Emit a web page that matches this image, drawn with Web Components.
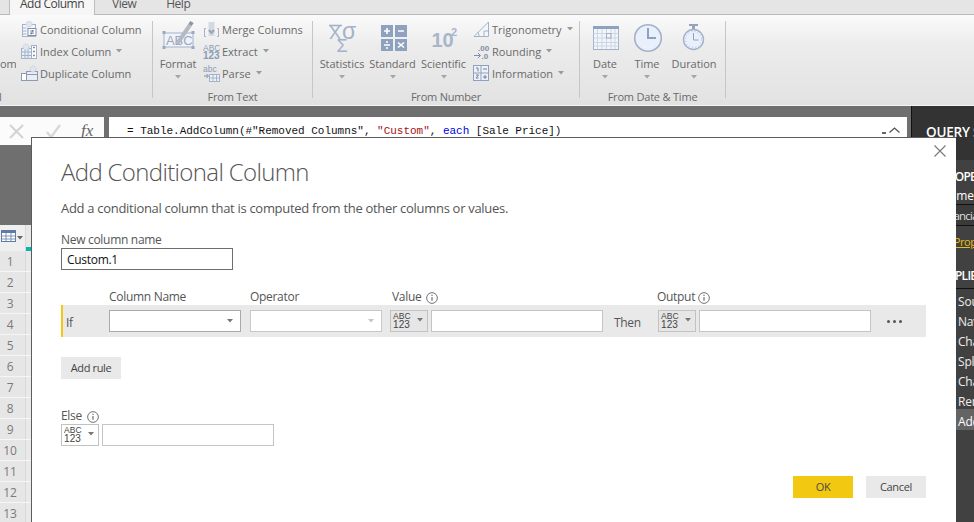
<!DOCTYPE html>
<html><head><meta charset="utf-8"><title>Add Conditional Column</title>
<style>
html,body{margin:0;padding:0;background:#6f6f6f;}
body{font-family:"Open Sans","Liberation Sans",sans-serif;width:974px;height:522px;overflow:hidden;}
</style></head><body>
<pq-app></pq-app>
<script>
const UI='"Open Sans","Liberation Sans",sans-serif';
function def(name,css,html,init){
  customElements.define(name,class extends HTMLElement{
    connectedCallback(){
      if(this.shadowRoot)return;
      const r=this.attachShadow({mode:'open'});
      const h=typeof html==='function'?html(this):html;
      r.innerHTML='<style>'+css+'</style>'+h;
      if(init)init(this,r);
    }
  });
}
const C='#a3b2ca',D='#8ea2c0',G='#c4ccd8';
const caret=(c='#9a9a9a')=>`<svg class="car" width="6" height="3.5" viewBox="0 0 7 4"><path d="M0 0h7L3.5 4z" fill="${c}"/></svg>`;
const gear=(x,y)=>`<circle cx="${x}" cy="${y}" r="3" fill="#dfe5ee" stroke="${G}" stroke-dasharray="1.5 1"/>`;
const txt=(x,y,s,t,f=C,w=400,fam='Liberation Sans')=>`<text x="${x}" y="${y}" font-size="${s}" font-weight="${w}" font-family="${fam}" fill="${f}">${t}</text>`;
const ICONS={
cond:`<rect x="1.5" y="3.5" width="13" height="12" fill="#f3f6fa" stroke="${C}"/><path d="M1.5 7h4M1.5 10h4M1.5 13h4" stroke="${C}"/>${gear(8,3)}<rect x="7" y="7.5" width="8" height="7" fill="#fff" stroke="#7e8fa8"/><path d="M9 10h4M9 12.2h4M12 9l-2 4.5" stroke="#5c6b82" stroke-width=".8" fill="none"/>`,
index:`<rect x=".5" y="5.5" width="10" height="10" fill="#e9eef5" stroke="${C}"/><path d="M4 5.5v10M7 5.5v10M.5 9h10M.5 12.5h10" stroke="${C}"/>${gear(5,4)}<rect x="10.5" y="2.5" width="5" height="13" fill="#fff" stroke="${C}"/><path d="M12 4.5h2M12 8.5h2M12 12.5h2" stroke="#7e8fa8" stroke-width="1.4"/>`,
dup:`<rect x=".5" y="8.5" width="9" height="7" fill="#fff" stroke="#8c9bb3"/><rect x="5.5" y="6.5" width="11" height="9" fill="#e9eef5" stroke="#8c9bb3"/>${gear(12,4)}<path d="M5.5 9.5h11" stroke="#8c9bb3"/>`,
merge:`<path d="M3 7.5H1.5v8H3M14 7.5h1.5v8H14" fill="none" stroke="${C}"/><rect x="5.5" y="1" width="6" height="14" fill="#d5dae2"/><path d="M6 9l2.5 3L11 9" stroke="#9aa4b4" stroke-width="2" fill="none"/>`,
extract:txt(0,7.5,8.5,'ABC','#8a9bb5',400)+txt(0,16,10,'123','#8a9bb5',700),
parse:txt(0,7,8.5,'abc','#8a9bb5',400)+`<path d="M1 11h4M3.5 9l2 2-2 2" stroke="#7e8fa8" fill="none"/><rect x="6.5" y="9.5" width="10" height="7" fill="#eef2f8" stroke="${C}"/><path d="M10 9.5v7M13.5 9.5v7M6.5 13h10" stroke="${C}"/>`,
trig:`<path d="M1 15.5L15.5 1v14.5z" fill="#f4f6f9" stroke="${C}"/><path d="M11 15V10h4.5" fill="none" stroke="${C}"/><path d="M6 15a5 5 0 0 0-1.5-4" fill="none" stroke="${C}"/>`,
round:txt(5,7.5,8,'.00','#7e8fa8',700)+`<path d="M1 12.5h6M5 10l2.5 2.5L5 15" stroke="#7e8fa8" fill="none"/>`+txt(8.5,16,8,'.0','#7e8fa8',700),
info:`<rect x=".5" y=".5" width="15" height="15" fill="#eef2f8" stroke="${D}"/><path d="M8 .5v15M.5 8h15" stroke="${D}"/><path d="M3 3h2v3.5M10 4h4M10 12h4M12 10v4M3 10h2.5L3 13h2.5" stroke="#6d82a3" fill="none"/>`,
format:`<rect x="5" y="14" width="29" height="14" fill="#f0f4fa" stroke="${C}"/><g fill="#9aa9c2"><rect x="3.5" y="12" width="3" height="3"/><rect x="32.5" y="12" width="3" height="3"/><rect x="3.5" y="27" width="3" height="3"/><rect x="32.5" y="27" width="3" height="3"/></g>`+txt(7,26,13,'ABC','#98a8c2')+`<path d="M18 25L31 6" stroke="#b4b9c2" stroke-width="4"/><path d="M31 6l2-3" stroke="#8c95a3" stroke-width="4"/>`,
stats:`<path d="M6 6.5h13" stroke="${C}" stroke-width="1.6"/>`+txt(6,20,18,'X',C)+txt(19,20,23,'σ',C)+txt(13.5,33,18,'Σ',C),
standard:`<g fill="${D}"><rect x="7" y="6" width="12" height="12"/><rect x="21" y="6" width="12" height="12"/><rect x="7" y="20" width="12" height="12"/><rect x="21" y="20" width="12" height="12"/></g><path d="M10 12h6M13 9v6M24 12h6M10 26h6M24 23.5l6 5M30 23.5l-6 5" stroke="#fff" stroke-width="1.6"/><circle cx="13" cy="23" r="1" fill="#fff"/><circle cx="13" cy="29" r="1" fill="#fff"/>`,
sci:txt(6.5,28,20,'10','#a9b6c9',700)+txt(26,17,11,'2','#a9b6c9',700),
date:`<rect x="7.5" y="7.5" width="25" height="23" fill="#f2f5fa" stroke="${C}"/><rect x="7" y="7" width="26" height="3" fill="${D}"/><path d="M11.5 10v20M16 10v20M20.5 10v20M25 10v20M29 10v20M7.5 14.5h25M7.5 19h25M7.5 23.5h25M7.5 27h25" stroke="#cdd6e5"/><rect x="20.5" y="14.5" width="4.5" height="4.5" fill="none" stroke="#a3b2ca"/>`,
time:`<circle cx="20" cy="19" r="13.3" fill="#e9f0fb" stroke="${C}" stroke-width="1.6"/><path d="M20 9v10h8" fill="none" stroke="${D}" stroke-width="2"/>`,
dur:`<circle cx="18.5" cy="20.5" r="10" fill="#e9f0fb" stroke="${C}" stroke-width="1.4"/><path d="M14 6h9" stroke="#98a4b6" stroke-width="2"/><path d="M18.5 7v3" stroke="#98a4b6" stroke-width="3"/><path d="M18.5 14v7h5" fill="none" stroke="${D}"/><circle cx="18.5" cy="20.5" r="8" fill="none" stroke="#b4c0d4" stroke-dasharray="1 2.2"/>`,
table:`<rect x=".5" y=".5" width="14" height="11" fill="#fff" stroke="#5f7ba3"/><rect x="0" y="0" width="15" height="3" fill="#5f7ba3"/><path d="M5 3v8M10 3v8M.5 6h14M.5 9h14" stroke="#7e95b7"/>`
};

def('rb-tab',`:host{display:block;padding:0 11px;height:14px;line-height:13px;font-size:12px;color:#555;letter-spacing:-.5px;margin-top:-3px;white-space:nowrap}
:host([active]){background:#f6f6f6;border:1px solid #bdbdbd;border-top:0;border-bottom:0;margin-top:0;height:15px;line-height:7px;color:#444;padding:0 10px}`,`<slot></slot>`);

def('pq-tabs',`:host{display:flex;height:14px;background:#e5e5e5;border-bottom:1px solid #b9b9b9;padding-left:9px;flex:none;overflow:visible}`,`<slot></slot>`);

def('rb-small',`:host{display:flex;align-items:center;height:22px;gap:2px;font-size:11px;letter-spacing:0;color:#6a6a6a;white-space:nowrap}
svg.i{width:17px;height:17px;flex:none;display:block}.c{margin-left:3px;display:flex}`,
e=>`<svg class="i" viewBox="0 0 17 17">${ICONS[e.getAttribute('icon')]}</svg><span><slot></slot></span>${e.hasAttribute('caret')?`<span class="c">${caret()}</span>`:''}`);

def('rb-large',`:host{display:flex;flex-direction:column;align-items:center;font-size:11px;letter-spacing:-.05px;color:#6a6a6a;white-space:nowrap}
svg.big{width:38px;height:38px;display:block;flex:none}.t{line-height:14px;height:14px}.c{display:flex;margin-top:4px}`,
e=>`<svg class="big" viewBox="0 0 38 38">${ICONS[e.getAttribute('icon')]}</svg><span class="t"><slot></slot></span><span class="c">${caret('#a5a5a5')}</span>`);

def('rb-stack',`:host{display:flex;flex-direction:column;margin-top:-1px}`,`<slot></slot>`);
def('rb-sep',`:host{display:block;width:1px;height:77px;margin-top:2px;background:#c6c6c6;flex:none}`,``);
def('rb-group',`:host{display:flex;flex-direction:column;flex:none;height:86px;box-sizing:border-box}
.row{display:flex;height:71px;flex:none}
.lab{text-align:center;font-size:11px;letter-spacing:-.2px;line-height:14px;color:#6a6a6a;white-space:nowrap}`,
e=>`<div class="row"><slot></slot></div><div class="lab">${e.getAttribute('label')||''}</div>`);

def('pq-ribbon',`:host{display:flex;flex:none;height:91px;box-sizing:border-box;padding-top:4px;background:linear-gradient(#fafafa,#ececec 35%,#e2e2e2);border-bottom:1px solid #f4f4f4;overflow:hidden;align-items:flex-start}`,`<slot></slot>`);

def('pq-formula',`:host{display:flex;gap:5px;height:28px;flex:none;margin-top:11px;padding-right:4px}
.l{width:104px;background:#fbfbfb;display:flex;align-items:flex-start;flex:none}
.l svg{display:block}
.fx{font:italic 17px "Liberation Serif",serif;color:#666;margin-left:1px;margin-top:4px}
.r{flex:1;background:#fff;font:11px/29px "Liberation Mono",monospace;letter-spacing:-.02px;color:#111;padding-left:18px;white-space:pre;display:flex;justify-content:space-between;height:28px}
.s{color:#a31515}.k{color:#0000e0}
.e{display:flex;align-items:flex-start;gap:3px;padding:10px 7px 0 0}
.m{width:4px;height:2px;background:#666;margin-top:5px}`,
`<div class="l"><svg width="80" height="28" viewBox="0 0 80 28"><path d="M10 8l13 13M23 8L10 21" stroke="#d2d2d2" stroke-width="2"/><path d="M47 15l4 5 9-12" stroke="#d8d8d8" stroke-width="2.4" fill="none"/></svg><span class="fx">fx</span></div>
<div class="r"><span>= Table.AddColumn(#"Removed Columns", <span class="s">"Custom"</span>, <span class="k">each</span> [Sale Price])</span><span class="e"><span class="m"></span><svg width="11" height="6" viewBox="0 0 11 6"><path d="M.5 5.5L5.5 1l5 4.5" fill="none" stroke="#555" stroke-width="1.3"/></svg></span></div>`);

def('pq-rows',`:host{display:block;background:#fff;flex:none}
.h{display:flex;height:26px;background:#efefef}
.h .a{width:25px;flex:none;padding:5px 0 0 1px;box-sizing:border-box;display:flex;gap:1px;align-items:flex-start}
.h .a span{margin-top:6px;display:flex}
.h .b{flex:1;background:#e8e8e8;border-left:1px solid #d8d8d8}
.h .b i{display:block;height:4px;background:#01b8aa;margin-top:22px}
.rw{display:flex;height:21px;box-sizing:border-box;border-bottom:1px solid #f6f6f6}
.n{width:25px;flex:none;box-sizing:border-box;padding-right:5px;text-align:center;background:#e6e6e6;color:#7a7a7a;font-size:12px;line-height:21px;letter-spacing:-.2px}
.c{flex:1;background:#e9e9e9;border-left:1px solid #d8d8d8}`,
()=>{let s=`<div class="h"><div class="a"><svg width="15" height="12" viewBox="0 0 15 12">${ICONS.table}</svg><span>${caret('#666')}</span></div><div class="b"><i></i></div></div>`;
for(let i=1;i<=13;i++)s+=`<div class="rw"><div class="n">${i}</div><div class="c"></div></div>`;return s;});

def('pq-main',`:host{flex:1;display:flex;flex-direction:column;min-width:0;background:#6f6f6f}
.sp{height:80px;flex:none}`,`<slot name="f"></slot><div class="sp"></div><slot name="r"></slot>`);

def('pq-pane',`:host{display:block;width:63px;flex:none;background:#333;border-left:1px solid #111;box-sizing:border-box;overflow:hidden;color:#fff;font-size:12px;letter-spacing:-.2px;white-space:nowrap}
.q{height:54px;padding:11px 0 0 14px;font-weight:600;font-size:13.5px;line-height:30px;box-sizing:border-box;background:#333}
.b{background:#414141;height:400px;padding-left:29px}
.hd{font-weight:600;height:30px;line-height:33px;letter-spacing:-.7px}
.nm{height:14px;line-height:12px}
.inp{height:20px;margin:0 0 0 -29px;padding-left:28px;border-top:1px solid #111;border-bottom:1px solid #111;background:#3a3a3a;line-height:21px;color:#ddd;font-size:11.5px;letter-spacing:-.8px}
.ln{color:#e8bf14;text-decoration:underline;line-height:16px;margin:8px 0 0 -1px;height:16px;font-size:11px;letter-spacing:-.4px}
.hd2{font-weight:600;margin:15px 0 0 0;height:23px;line-height:21px;letter-spacing:-.7px}
.rule{height:1px;background:#111;margin-left:-29px}
.st{margin:0 0 0 -29px;padding-left:46px;height:20px;line-height:25px;color:#eee}
.st.on{background:#646464;color:#fff;height:21px}`,
`<div class="q">QUERY SETTINGS</div><div class="b"><div class="hd">PROPERTIES</div><div class="nm">Name</div><div class="inp">Financials</div><div class="ln">All Properties</div><div class="hd2">APPLIED STEPS</div><div class="rule"></div>
<div class="st">Source</div><div class="st">Navigation</div><div class="st">Changed Type</div><div class="st">Split Column</div><div class="st">Changed Type1</div><div class="st">Removed Columns</div><div class="st on">Added Custom</div></div>`);

def('pq-info',`:host{display:inline-flex;vertical-align:middle;margin-left:5px}svg{display:block}`,
`<svg width="12" height="12" viewBox="0 0 13 13"><circle cx="6.5" cy="6.5" r="5.8" fill="none" stroke="#666"/><path d="M6.5 5.5v4" stroke="#555" stroke-width="1.1"/><path d="M6.5 3v1.2" stroke="#555" stroke-width="1.1"/></svg>`);

def('pq-input',`:host{display:block;box-sizing:border-box;height:22px;border:1px solid #c4c4c4;background:#fff;font-size:12px;line-height:21px;padding-left:5px;color:#111;letter-spacing:-.3px;white-space:nowrap}
:host([dark]){border-color:#6e6e6e}`,`<slot></slot>`);

def('pq-select',`:host{display:flex;box-sizing:border-box;height:22px;border:1px solid #a9a9a9;background:#fff;align-items:center;justify-content:flex-end;padding-right:7px}
:host([off]){border-color:#c8c8c8}`,e=>caret(e.hasAttribute('off')?'#c4c4c4':'#777'));

def('pq-type',`:host{display:flex;box-sizing:border-box;width:38px;height:22px;border:1px solid #c2c2c2;background:#e6e6e6;align-items:flex-start;gap:6px;padding:2px 0 0 2px;flex:none;color:#444}
:host([light]){background:#fff}
.w{display:block}
.t{font-size:8.5px;line-height:7px;font-family:"Liberation Sans",sans-serif;display:block;letter-spacing:.1px}
.b{font-size:10px;line-height:10px;letter-spacing:.1px;display:block;font-family:"Liberation Sans",sans-serif}
.c{display:flex;margin-top:5px}`,
`<span class="w"><span class="t">ABC</span><span class="b">123</span></span><span class="c">${caret('#777')}</span>`);

def('pq-btn',`:host{display:block;box-sizing:border-box;width:60px;height:22px;text-align:center;font-size:11px;line-height:22px;letter-spacing:-.35px;background:#e9e9e9;color:#444;flex:none}
:host([primary]){background:#f2c811;color:#4a4a4a}`,`<slot></slot>`);

def('pq-rule',`:host{display:block;font-size:12px;letter-spacing:-.3px;color:#555}
.hd,.row{display:grid;grid-template-columns:48px 132px 9px 132px 8px 38px 3px 172px 11px 27px 17px 38px 3px 172px 16px 17px 1fr}
.hd{height:18px;line-height:20px}
.row{height:32px;background:#e9e9e9;border-left:2px solid #f2c811;align-items:center;box-sizing:border-box;grid-template-columns:46px 132px 9px 132px 8px 38px 3px 172px 11px 27px 17px 38px 3px 172px 16px 17px 1fr}
.if{padding:2px 0 0 3px}.then{padding-top:2px}
.dots{display:flex;gap:3px}.dots i{width:3px;height:3px;border-radius:50%;background:#555;display:block}
.a{grid-column:2}.b{grid-column:4}.cc{grid-column:6/9;white-space:nowrap;padding-left:2px}.d{grid-column:12/15;white-space:nowrap;margin-left:-1px}
.d pq-info{margin-left:3px}`,
`<div class="hd"><span class="a">Column Name</span><span class="b">Operator</span><span class="cc">Value<pq-info></pq-info></span><span class="d">Output<pq-info></pq-info></span></div>
<div class="row"><span class="if">If</span><pq-select></pq-select><span></span><pq-select off></pq-select><span></span><pq-type></pq-type><span></span><pq-input></pq-input><span></span><span class="then">Then</span><span></span><pq-type></pq-type><span></span><pq-input></pq-input><span></span><span class="dots"><i></i><i></i><i></i></span><span></span></div>`);

def('pq-dialog',`:host{position:absolute;left:31px;top:137px;width:925px;height:385px;box-sizing:border-box;background:#fff;border-left:1px solid #5c5c5c;border-top:1px solid #5c5c5c;display:block;padding:0 30px 0 29px;color:#555;font-size:12px;letter-spacing:-.3px}
.x{position:absolute;right:10px;top:7px;display:block}
h1{margin:0;font-weight:300;font-size:24px;letter-spacing:-.65px;line-height:34px;padding-top:17px;color:#555;height:32px}
.d{margin-top:13px;line-height:17px;height:17px;color:#555;font-size:13px}
.nl{margin-top:13px;line-height:19px;height:18px}
.ni{width:172px}
pq-rule{margin-top:17px}
.add{margin-top:20px}
.el{margin-top:27px;line-height:19px;height:17px}
.er{display:flex;gap:3px;margin-top:1px}
.er pq-input{width:172px}
.ft{display:flex;justify-content:flex-end;gap:13px;margin-top:30px}`,
`<svg class="x" width="12" height="12" viewBox="0 0 12 12"><path d="M.5.5l11 11M11.5.5l-11 11" stroke="#777" stroke-width="1.1"/></svg>
<h1>Add Conditional Column</h1>
<div class="d">Add a conditional column that is computed from the other columns or values.</div>
<div class="nl">New column name</div><pq-input class="ni" dark>Custom.1</pq-input>
<pq-rule></pq-rule>
<pq-btn class="add">Add rule</pq-btn>
<div class="el">Else<pq-info></pq-info></div>
<div class="er"><pq-type light></pq-type><pq-input></pq-input></div>
<div class="ft"><pq-btn primary>OK</pq-btn><pq-btn>Cancel</pq-btn></div>`);

def('pq-app',`:host{display:flex;flex-direction:column;position:relative;width:974px;height:522px;overflow:hidden;font-family:${UI}}
.body{display:flex;flex:1;min-height:0}
.stub{width:16px;flex:none;display:flex;flex-direction:column;overflow:hidden;font-size:11px;color:#6a6a6a;letter-spacing:-.2px}
.stub .o{margin-top:38px;line-height:14px}.stub .l{margin-top:19px;line-height:14px;margin-left:-1px}`,
`<pq-tabs><rb-tab active>Add Column</rb-tab><rb-tab style="margin-left:6px">View</rb-tab><rb-tab style="margin-left:8px">Help</rb-tab></pq-tabs>
<pq-ribbon>
 <div class="stub"><span class="o">om</span><span class="l">l</span></div>
 <rb-group style="width:136px;padding-left:5px"><rb-stack><rb-small icon="cond">Conditional Column</rb-small><rb-small icon="index" caret>Index Column</rb-small><rb-small icon="dup">Duplicate Column</rb-small></rb-stack></rb-group>
 <rb-sep></rb-sep>
 <rb-group label="From Text" style="width:159px"><rb-large icon="format" style="width:50px">Format</rb-large><rb-stack><rb-small icon="merge">Merge Columns</rb-small><rb-small icon="extract" caret>Extract</rb-small><rb-small icon="parse" caret>Parse</rb-small></rb-stack></rb-group>
 <rb-sep></rb-sep>
 <rb-group label="From Number" style="width:266px"><rb-large icon="stats" style="width:50px;margin-left:4px">Statistics</rb-large><rb-large icon="standard" style="width:51px">Standard</rb-large><rb-large icon="sci" style="width:51px">Scientific</rb-large><rb-stack style="margin-left:4px"><rb-small icon="trig" caret>Trigonometry</rb-small><rb-small icon="round" caret>Rounding</rb-small><rb-small icon="info" caret>Information</rb-small></rb-stack></rb-group>
 <rb-sep></rb-sep>
 <rb-group label="From Date &amp; Time" style="width:145px"><rb-large icon="date" style="width:42px;margin-left:4px">Date</rb-large><rb-large icon="time" style="width:42px">Time</rb-large><rb-large icon="dur" style="width:52px">Duration</rb-large></rb-group>
 <rb-sep></rb-sep>
</pq-ribbon>
<div class="body"><pq-main><pq-formula slot="f"></pq-formula><pq-rows slot="r"></pq-rows></pq-main><pq-pane></pq-pane></div>
<pq-dialog></pq-dialog>`);
</script>
</body></html>
